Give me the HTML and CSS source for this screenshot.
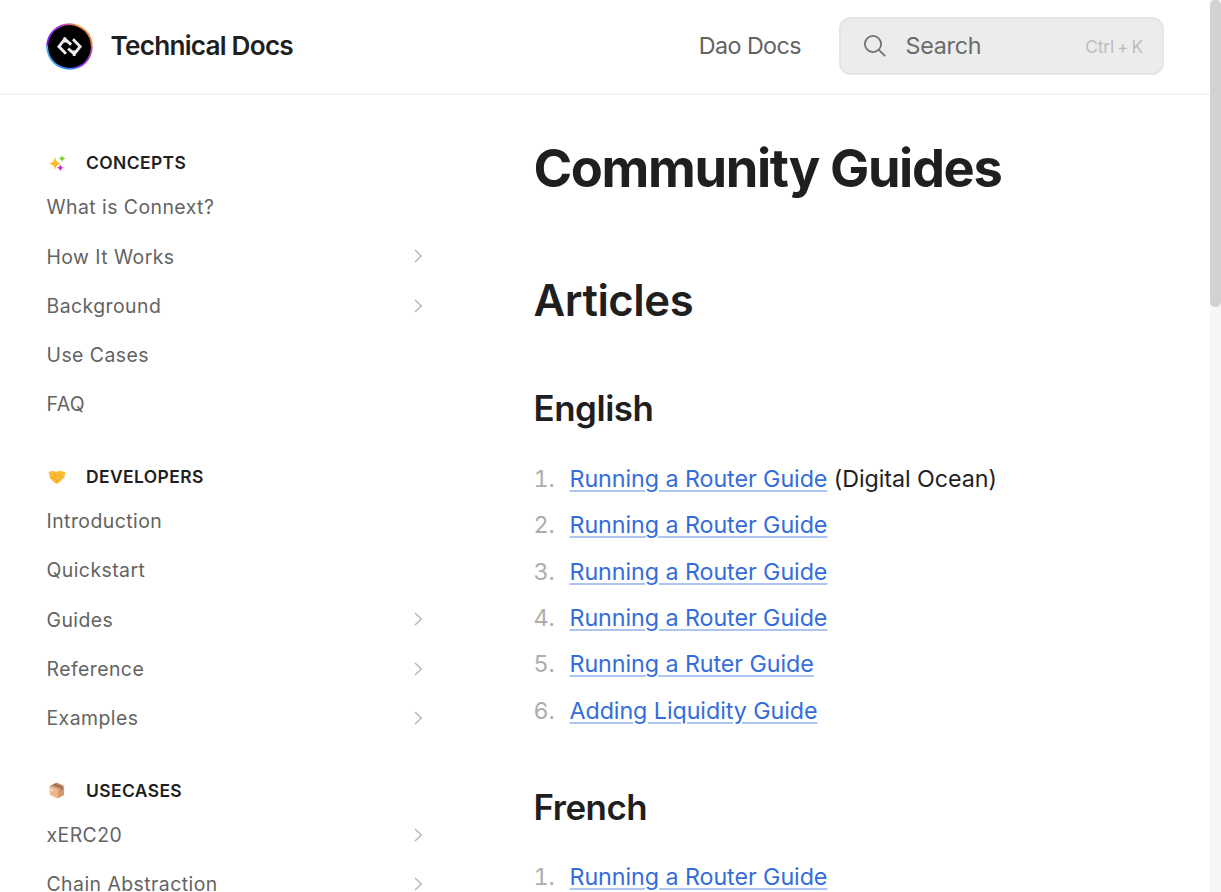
FILE: index.html
```html
<!DOCTYPE html>
<html lang="en">
<head>
<meta charset="utf-8">
<title>Community Guides - Technical Docs</title>
<link rel="stylesheet" href="styles.css">
</head>
<body>
<svg class="defs" width="0" height="0"><symbol id="chev" viewBox="0 0 10 14"><path d="M1 1l6.300 6-6.300 6" fill="none" stroke="#b5b5b5" stroke-width="1.4"/></symbol></svg>
<div class="page">
  <header class="header">
    <svg class="logo" viewBox="0 0 48 48">
      <defs>
        <linearGradient id="warm" x1="0" y1="0" x2="1" y2="0"><stop offset="0" stop-color="#7c22f5"/><stop offset=".3" stop-color="#b12fc5"/><stop offset=".7" stop-color="#f5a04b"/><stop offset="1" stop-color="#e8804a"/></linearGradient>
        <linearGradient id="cool" x1="0" y1="0" x2="1" y2="0"><stop offset="0" stop-color="#3cb4ff"/><stop offset=".5" stop-color="#3b8df5"/><stop offset=".8" stop-color="#7a22f0"/><stop offset="1" stop-color="#c05a90"/></linearGradient>
      </defs>
      <path d="M.2 24a23.800 23.800 0 0 1 47.600 0z" fill="url(#warm)"/>
      <path d="M.2 24a23.800 23.800 0 0 0 47.600 0z" fill="url(#cool)"/>
      <circle cx="24" cy="24" r="21.900" fill="#000"/>
      <path d="M20.400 31.400l-7.200-7.300 6-7.600 6.500 5.500M27.600 16.600l7.300 7.400-6 7.600-6.300-5.400M19.200 14.500v5.500M28.800 28v5.700" fill="none" stroke="#eee" stroke-width="2.900"/>
    </svg>
    <div class="brand">Technical Docs</div>
    <a class="dao">Dao Docs</a>
    <div class="search">
      <svg class="glass" viewBox="0 0 24 24"><circle cx="10" cy="10" r="8.1"/><path d="M15.8 15.8l6.4 6.4"/></svg>
      <span class="search-label">Search</span><span class="keys">Ctrl + K</span>
    </div>
  </header>
  <div class="body">
    <nav class="side">
      <section class="group">
        <h4 class="group-title"><svg class="emoji" viewBox="0 0 18 18"><path d="M7 3Q7.800 8.200 12.500 9.500 7.800 10.800 7 16 6.200 10.800 1.500 9.500 6.200 8.200 7 3z" fill="#fcbc2c"/><path d="M14 1Q14.500 4 17.500 4.500 14.500 5 14 8 13.500 5 10.500 4.500 13.500 4 14 1z" fill="#79cf22"/><path d="M12.300 10.500Q12.800 13.300 15.600 13.800 12.800 14.300 12.300 17.200 11.800 14.300 9 13.800 11.800 13.300 12.300 10.500z" fill="#cb20ca"/></svg><span>CONCEPTS</span></h4>
        <a class="item"><span>What is Connext?</span></a>
        <a class="item"><span>How It Works</span><svg class="chev"><use href="#chev"/></svg></a>
        <a class="item"><span>Background</span><svg class="chev"><use href="#chev"/></svg></a>
        <a class="item"><span>Use Cases</span></a>
        <a class="item"><span>FAQ</span></a>
      </section>
      <section class="group">
        <h4 class="group-title"><svg class="emoji" viewBox="0 0 18 18"><path d="M.6 4.300L4.500 2.800 8 3.700 12.800 2.700 17.400 4.300 16.300 9.700 14.500 11 11.500 14.300 8.800 16 6 14.200 2.300 10.500z" fill="#fdbd32"/><path d="M7.500 4.300L5.800 7.600 8 8.200 10.400 6.700 14.800 10.600M10 10l2 2.400M7.300 11.300l2.500 2.500M2.400 10l2.200-1 1.800 2 1.800.5 1.200 2.500" fill="none" stroke="#e39a2e" stroke-width=".7"/></svg><span>DEVELOPERS</span></h4>
        <a class="item"><span>Introduction</span></a>
        <a class="item"><span>Quickstart</span></a>
        <a class="item"><span>Guides</span><svg class="chev"><use href="#chev"/></svg></a>
        <a class="item"><span>Reference</span><svg class="chev"><use href="#chev"/></svg></a>
        <a class="item"><span>Examples</span><svg class="chev"><use href="#chev"/></svg></a>
      </section>
      <section class="group">
        <h4 class="group-title"><svg class="emoji" viewBox="0 0 18 18"><path d="M1.500 5.100L8.700 1.600l7.500 3.300L10 8.200z" fill="#c58b68"/><path d="M1.500 5.100L10 8.200V17.600L2 13.900z" fill="#eab68a"/><path d="M16.200 4.900L10 8.200V17.600l6-3.700z" fill="#d39a70"/><path d="M5 3.500l7.800 3.200v2.700l1.600-.8V5.900L6.600 2.700z" fill="#8e6149"/><path d="M2.600 7.400l2.500 1v2l-2.500-1z" fill="#f5e5d6"/></svg><span>USECASES</span></h4>
        <a class="item"><span>xERC20</span><svg class="chev"><use href="#chev"/></svg></a>
        <a class="item"><span>Chain Abstraction</span><svg class="chev"><use href="#chev"/></svg></a>
      </section>
    </nav>
    <main class="main">
      <h1>Community Guides</h1>
      <h2>Articles</h2>
      <h3>English</h3>
      <ol class="list">
        <li><span class="num">1.</span><a>Running a Router Guide</a>&nbsp;(Digital Ocean)</li>
        <li><span class="num">2.</span><a>Running a Router Guide</a></li>
        <li><span class="num">3.</span><a>Running a Router Guide</a></li>
        <li><span class="num">4.</span><a>Running a Router Guide</a></li>
        <li><span class="num">5.</span><a>Running a Ruter Guide</a></li>
        <li><span class="num">6.</span><a>Adding Liquidity Guide</a></li>
      </ol>
      <h3 class="french">French</h3>
      <ol class="list last">
        <li><span class="num">1.</span><a>Running a Router Guide</a></li>
      </ol>
    </main>
  </div>
</div>
<div class="track"><div class="thumb"></div></div>
</body>
</html>
```
FILE: styles.css
```css
* { box-sizing: border-box; }
body { margin: 0; height: 892px; overflow: hidden; display: flex; background: #fff; color: #1f1f1f; font-family: Inter, "Liberation Sans", sans-serif; }
.defs { display: none; }
.page { width: 1210px; height: 892px; overflow: hidden; }
.header { height: 94.5px; border-bottom: 2px solid #f3f3f3; display: flex; align-items: center; padding: 0 46px; }
.logo { width: 47px; height: 47px; }
.brand { margin-left: 17.5px; font-size: 26.2px; font-weight: 600; letter-spacing: -0.78px; margin-top: -2px; }
.dao { margin-left: auto; font-size: 23.27px; letter-spacing: -0.55px; color: #636363; margin-top: -2px; }
.search { margin-left: 38px; width: 325px; height: 58px; margin-top: -1px; border: 2px solid #e5e5e5; border-radius: 12px; background: #ececec; display: flex; align-items: center; padding: 0 19px 0 21.5px; color: #6b6b6b; font-size: 23.27px; }
.glass { width: 24px; height: 24px; fill: none; stroke: #707070; stroke-width: 1.8; }
.search-label { margin: -0.5px 0 0 19px; letter-spacing: -0.25px; }
.keys { margin: 1.5px 0 0 auto; font-size: 17.45px; letter-spacing: -0.2px; word-spacing: -1.6px; color: #bcbcbc; }
.body { display: flex; }
.side { width: 533.5px; padding: 48.5px 110px 0 46.5px; }
.group { margin-bottom: 28px; }
.group-title { margin: 0; height: 39.5px; display: flex; align-items: center; font-size: 17.45px; font-weight: 600; letter-spacing: 0.4px; }
.emoji { width: 18px; height: 18px; margin: 0 20.5px 0 1px; }
.item { display: flex; align-items: center; justify-content: space-between; height: 49.25px; font-size: 19.4px; letter-spacing: 0.46px; color: #636363; }
.item span { padding-top: 0.7px; }
.chev { width: 10px; height: 14px; }
.main { width: 640px; padding-top: 41.5px; }
h1, h2, h3 { margin: 0; }
h1 { font-size: 52.36px; font-weight: 700; line-height: 65px; letter-spacing: -1.36px; }
h2 { margin-top: 73px; font-size: 43.64px; font-weight: 600; line-height: 54px; letter-spacing: -0.45px; }
h3 { margin-top: 58px; font-size: 34.9px; font-weight: 600; line-height: 44px; letter-spacing: -0.45px; }
.french { margin-top: 51px; }
.list { margin: 26px 0 0; padding: 0; list-style: none; }
.last { margin-top: 25px; }
.list li { height: 46.35px; line-height: 46.35px; font-size: 23.27px; letter-spacing: -0.06px; display: flex; white-space: nowrap; }
.num { width: 36px; color: #adadad; font-variant-numeric: tabular-nums; }
.list a { color: #346ddb; text-decoration: underline; text-decoration-color: #aec5f1; text-decoration-thickness: 2px; text-underline-offset: 3px; }
.track { width: 11px; height: 892px; background: #f6f6f6; }
.thumb { height: 307px; background: #d2d2d2; border-radius: 5px; }
```
